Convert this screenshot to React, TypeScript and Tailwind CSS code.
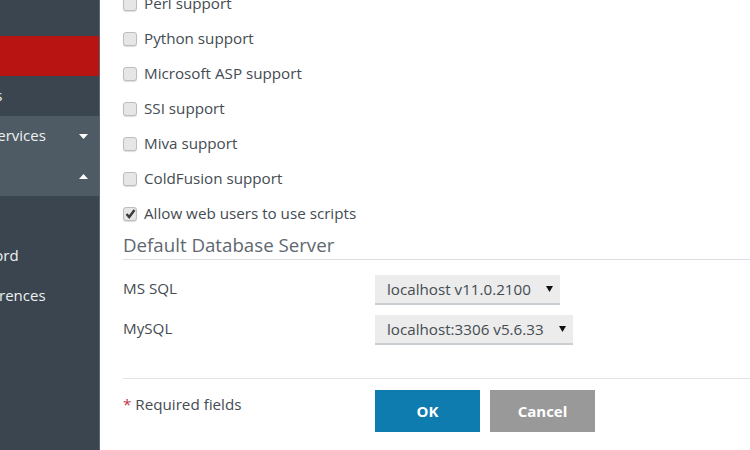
import React from "react";

const font = { fontFamily: '"Open Sans", sans-serif' };

function Caret({ up }: { up?: boolean }) {
  return (
    <svg width="9" height="5" viewBox="0 0 9 5" className="absolute left-[79px] top-[18px]">
      <path d={up ? "M0 5 L4.5 0 L9 5 Z" : "M0 0 L9 0 L4.5 5 Z"} fill="#ffffff" />
    </svg>
  );
}

function NavRow({ label, shift, light, red, caret }: { label?: string; shift?: string; light?: boolean; red?: boolean; caret?: "up" | "down" }) {
  return (
    <div className={`relative h-10 overflow-hidden flex items-center pb-[2px] ${red ? "bg-[#b81412]" : light ? "bg-[#4f5b64]" : ""}`}>
      {label && <span className={`whitespace-nowrap text-[15px] text-[#eef0f1] ${shift}`}>{label}</span>}
      {caret && <Caret up={caret === "up"} />}
    </div>
  );
}

function Check({ label, checked }: { label: string; checked?: boolean }) {
  return (
    <label className="flex items-center h-[35px] text-[15.2px] text-[#444b52]">
      <span className="w-[14px] h-[14px] rounded-[3px] bg-[#e6e6e6] border border-[#bdbdbd] shadow-[0_1px_1px_#ddd] mr-[7px] flex items-center justify-center">
        {checked && (
          <svg width="11" height="10" viewBox="0 0 11 10">
            <path d="M1.5 5 L4.2 8 L9.5 1" fill="none" stroke="#3a3a3a" strokeWidth="2.4" />
          </svg>
        )}
      </span>
      {label}
    </label>
  );
}

function Select({ value, w }: { value: string; w: string }) {
  return (
    <div className={`relative h-[30px] ${w} bg-[#ececec] border-b-2 border-[#c9ced3] flex items-center pl-3 text-[15.2px] text-[#444b52]`}>
      <span className="whitespace-nowrap">{value}</span>
      <svg width="7" height="6" viewBox="0 0 7 6" className="absolute right-[7px] top-[11px]">
        <path d="M0 0 L7 0 L3.5 6 Z" fill="#111" />
      </svg>
    </div>
  );
}

export default function App() {
  return (
    <div className="flex w-[750px] h-[450px] overflow-hidden bg-white" style={font}>
      <aside className="w-[100px] shrink-0 h-full bg-[#3a4550] border-r border-[#5b6670]">
        <div className="h-9" />
        <NavRow red />
        <NavRow label="Applications" shift="-ml-[83px]" />
        <NavRow label="Services" shift="-ml-[11px]" light caret="down" />
        <NavRow light caret="up" />
        <NavRow />
        <NavRow label="Password" shift="-ml-[49px]" />
        <NavRow label="Preferences" shift="-ml-[38px]" />
      </aside>
      <main className="flex-1 pl-[23px] -mt-[14px]">
        <Check label="Perl support" />
        <Check label="Python support" />
        <Check label="Microsoft ASP support" />
        <Check label="SSI support" />
        <Check label="Miva support" />
        <Check label="ColdFusion support" />
        <Check label="Allow web users to use scripts" checked />
        <div className="mt-[1px] h-[28px] border-b border-[#dcdfe1] text-[18.7px] leading-[26px] text-[#5f6870] whitespace-nowrap">Default Database Server</div>
        <div className="mt-[15px] flex items-start text-[15.2px] text-[#444b52]">
          <span className="w-[252px] leading-[26px]">MS SQL</span>
          <Select value="localhost v11.0.2100" w="w-[185px]" />
        </div>
        <div className="mt-[10px] flex items-start text-[15.2px] text-[#444b52]">
          <span className="w-[252px] leading-[26px]">MySQL</span>
          <Select value="localhost:3306 v5.6.33" w="w-[198px]" />
        </div>
        <div className="mt-[33px] border-t border-[#e4e4e4] pt-[11px] flex">
          <div className="w-[252px] pt-[3px] text-[15.2px] text-[#444b52]"><span className="text-[#c8314b]">*</span> Required fields</div>
          <button className="w-[105px] h-[42px] bg-[#0e7cae] text-white font-bold text-[15px]">OK</button>
          <button className="ml-[10px] w-[105px] h-[42px] bg-[#999999] text-white font-bold text-[15px]">Cancel</button>
        </div>
      </main>
    </div>
  );
}
